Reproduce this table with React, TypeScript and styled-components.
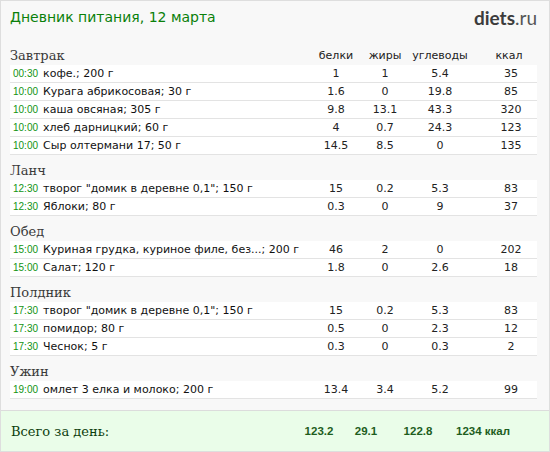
import React from 'react'
import styled, { createGlobalStyle } from 'styled-components'

const GlobalStyle = createGlobalStyle`
    body {
        margin: 0;
        background: #ffffff;
    }
`

const Card = styled.div`
    width: 550px;
    height: 452px;
    box-sizing: border-box;
    border: 1px solid #dedede;
    background: #f8f8f8;

    display: flex;
    flex-direction: column;
`

const Header = styled.div`
    height: 39px;
    padding: 0 12px 0 9px;

    display: flex;
    align-items: center;
    justify-content: space-between;
`

const Title = styled.div`
    font-family: "DejaVu Sans", Verdana, sans-serif;
    font-size: 14px;
    color: #0a800a;
    margin-top: -7px;
`

const Logo = styled.div`
    font-family: Lato, "Open Sans", sans-serif;
    font-size: 19px;
    color: #3c3c3c;
    margin-top: -6px;

    b {
        font-weight: 700;
    }

    span {
        font-weight: 400;
        color: #555;
    }
`

const Body = styled.div`
    flex: 1;
    padding: 0 12px 0 9px;
`

const Line = styled.div`
    display: grid;
    grid-template-columns: 1fr 48px 50px 60px 67px;
    align-items: center;
`

const SectionHead = styled(Line)`
    height: 25px;
    padding-top: 6px;
    box-sizing: border-box;
`

const SectionName = styled.div`
    font-family: "DejaVu Serif", Georgia, serif;
    font-size: 13px;
    color: #3a3a3a;
`

const ColTitle = styled.div<{ $shift?: number }>`
    font-family: "DejaVu Sans", Verdana, sans-serif;
    font-size: 11px;
    color: #222;
    text-align: center;
    padding-left: ${p => p.$shift ?? 0}px;
`

const Row = styled(Line)`
    height: 17px;
    background: #ffffff;
    border-bottom: 1px solid #e3e3e3;
`

const Name = styled.div`
    padding-left: 3px;
    font-family: "DejaVu Sans", Verdana, sans-serif;
    font-size: 11px;
    color: #111;
    white-space: nowrap;
    overflow: hidden;
`

const Time = styled.span`
    font-family: "Liberation Sans", Arial, sans-serif;
    font-size: 10px;
    color: #129412;
    margin-right: 5px;
`

const Num = styled.div<{ $shift?: number }>`
    font-family: "DejaVu Sans", Verdana, sans-serif;
    font-size: 11px;
    color: #222;
    text-align: center;
    padding-left: ${p => p.$shift ?? 0}px;
`

const Footer = styled.div`
    height: 40px;
    border-top: 1px solid #dcdcdc;
    background: #eafde9;
    padding: 0 39px 0 10px;

    display: flex;
    align-items: center;
`

const FooterLabel = styled.div`
    flex: 1;
    font-family: "DejaVu Serif", Georgia, serif;
    font-size: 13px;
    color: #0d3d0d;
`

const Total = styled.div<{ $width: number; $gap: number }>`
    width: ${p => p.$width}px;
    margin-left: ${p => p.$gap}px;
    text-align: center;
    font-family: "Liberation Sans", Arial, sans-serif;
    font-size: 11.5px;
    font-weight: bold;
    color: #1e5e1e;
`

type Food = [string, string, string, string, string, string]

const meals: { name: string; items: Food[] }[] = [
    {
        name: 'Завтрак',
        items: [
            ['00:30', 'кофе.; 200 г', '1', '1', '5.4', '35'],
            ['10:00', 'Курага абрикосовая; 30 г', '1.6', '0', '19.8', '85'],
            ['10:00', 'каша овсяная; 305 г', '9.8', '13.1', '43.3', '320'],
            ['10:00', 'хлеб дарницкий; 60 г', '4', '0.7', '24.3', '123'],
            ['10:00', 'Сыр олтермани 17; 50 г', '14.5', '8.5', '0', '135'],
        ],
    },
    {
        name: 'Ланч',
        items: [
            ['12:30', 'творог "домик в деревне 0,1"; 150 г', '15', '0.2', '5.3', '83'],
            ['12:30', 'Яблоки; 80 г', '0.3', '0', '9', '37'],
        ],
    },
    {
        name: 'Обед',
        items: [
            ['15:00', 'Куриная грудка, куриное филе, без...; 200 г', '46', '2', '0', '202'],
            ['15:00', 'Салат; 120 г', '1.8', '0', '2.6', '18'],
        ],
    },
    {
        name: 'Полдник',
        items: [
            ['17:30', 'творог "домик в деревне 0,1"; 150 г', '15', '0.2', '5.3', '83'],
            ['17:30', 'помидор; 80 г', '0.5', '0', '2.3', '12'],
            ['17:30', 'Чеснок; 5 г', '0.3', '0', '0.3', '2'],
        ],
    },
    {
        name: 'Ужин',
        items: [
            ['19:00', 'омлет 3 елка и молоко; 200 г', '13.4', '3.4', '5.2', '99'],
        ],
    },
]

const totals: { value: string; width: number; gap: number }[] = [
    { value: '123.2', width: 44, gap: 0 },
    { value: '29.1', width: 44, gap: 3 },
    { value: '122.8', width: 44, gap: 8 },
    { value: '1234 ккал', width: 54, gap: 16 },
]

function App() {
    return (
        <>
            <GlobalStyle />
            <Card>
                <Header>
                    <Title>Дневник питания, 12 марта</Title>
                    <Logo><b>diets</b><span>.ru</span></Logo>
                </Header>
                <Body>
                    {meals.map((meal, i) => (
                        <div key={meal.name}>
                            <SectionHead>
                                <SectionName>{meal.name}</SectionName>
                                {i === 0 && (
                                    <>
                                        <ColTitle>белки</ColTitle>
                                        <ColTitle>жиры</ColTitle>
                                        <ColTitle>углеводы</ColTitle>
                                        <ColTitle $shift={11}>ккал</ColTitle>
                                    </>
                                )}
                            </SectionHead>
                            {meal.items.map((f, j) => (
                                <Row key={j}>
                                    <Name><Time>{f[0]}</Time>{f[1]}</Name>
                                    <Num>{f[2]}</Num>
                                    <Num>{f[3]}</Num>
                                    <Num>{f[4]}</Num>
                                    <Num $shift={15}>{f[5]}</Num>
                                </Row>
                            ))}
                        </div>
                    ))}
                </Body>
                <Footer>
                    <FooterLabel>Всего за день:</FooterLabel>
                    {totals.map(t => (
                        <Total key={t.value} $width={t.width} $gap={t.gap}>{t.value}</Total>
                    ))}
                </Footer>
            </Card>
        </>
    )
}

export default App
